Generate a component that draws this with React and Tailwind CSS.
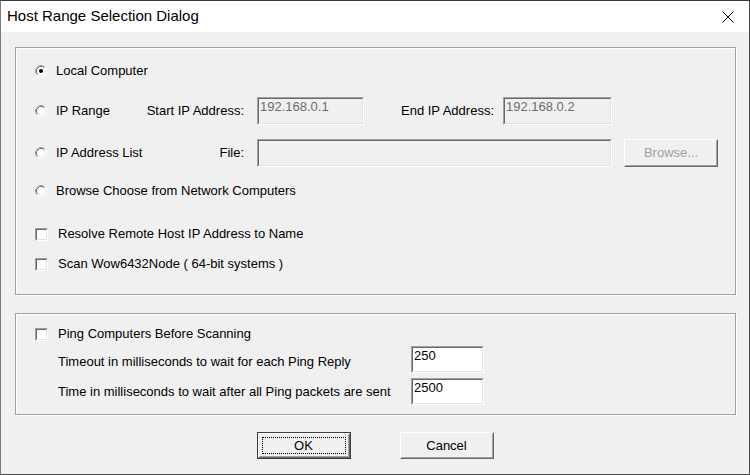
import React from 'react';

function Radio({ checked }) {
  return (
    <svg width="12" height="12" viewBox="0 0 12 12" className="shrink-0">
      <circle cx="6" cy="6" r="5.5" fill="#fff" />
      <path d="M2.11 9.89 A5.5 5.5 0 0 1 9.89 2.11" fill="none" stroke="#a0a0a0" strokeWidth="1" />
      <path d="M2.82 9.18 A4.5 4.5 0 0 1 9.18 2.82" fill="none" stroke="#696969" strokeWidth="1" />
      <path d="M9.89 2.11 A5.5 5.5 0 0 1 2.11 9.89" fill="none" stroke="#ffffff" strokeWidth="1" />
      <path d="M9.18 2.82 A4.5 4.5 0 0 1 2.82 9.18" fill="none" stroke="#e3e3e3" strokeWidth="1" />
      {checked && <circle cx="6" cy="6" r="2" fill="#000" />}
    </svg>
  );
}

function Check() {
  return (
    <div className="w-[13px] h-[13px] shrink-0 border border-t-[#a0a0a0] border-l-[#a0a0a0] border-b-white border-r-white">
      <div className="w-full h-full bg-white border border-t-[#696969] border-l-[#696969] border-b-[#e3e3e3] border-r-[#e3e3e3]" />
    </div>
  );
}

// sunken edit box
function Field({ className, value, disabled }) {
  return (
    <div className={`shrink-0 border border-t-[#a0a0a0] border-l-[#a0a0a0] border-b-white border-r-white ${className}`}>
      <div
        className={`w-full h-full border border-t-[#696969] border-l-[#696969] border-b-[#e3e3e3] border-r-[#e3e3e3] pl-[1px] leading-[15px] ${
          disabled ? 'bg-[#f0f0f0] text-[#6d6d6d]' : 'bg-white text-black'
        }`}
      >
        {value}
      </div>
    </div>
  );
}

function Button({ children, className, disabled, isDefault }) {
  const face = (
    <div className="w-full h-full border border-t-white border-l-white border-b-[#696969] border-r-[#696969]">
      <div className="w-full h-full border border-t-[#f0f0f0] border-l-[#f0f0f0] border-b-[#a0a0a0] border-r-[#a0a0a0] flex items-center justify-center p-[2px]">
        {isDefault ? (
          <div className="w-full h-full border border-dotted border-black flex items-center justify-center">{children}</div>
        ) : (
          <span className={disabled ? 'text-[#a0a0a0]' : 'text-black'}>{children}</span>
        )}
      </div>
    </div>
  );
  return (
    <div className={`shrink-0 bg-[#f0f0f0] ${isDefault ? 'border border-[#3c3c3c]' : ''} ${className}`}>
      {face}
    </div>
  );
}

function GroupBox({ className, children }) {
  return (
    <div className={`w-[721px] border border-[#a0a0a0] shadow-[inset_1px_1px_0_#fff,1px_1px_0_#fff] ${className}`}>
      {children}
    </div>
  );
}

export default function App() {
  return (
    <div className="w-[750px] h-[475px] flex flex-col bg-[#f0f0f0] border border-[#7a7a7a] border-t-[#3a3a3a] border-r-[#4a4a4a] border-b-[#4a4a4a] font-['Liberation_Sans',Arial,sans-serif] text-[13px] text-black overflow-hidden">
      {/* Title bar */}
      <div className="h-[31px] shrink-0 bg-white flex items-center justify-between pl-[6px] pr-[15px]">
        <span className="text-[15px]">Host Range Selection Dialog</span>
        <svg width="12" height="12" viewBox="0 0 12 12">
          <path d="M0.5 0.5 L11.5 11.5 M11.5 0.5 L0.5 11.5" stroke="#000" strokeWidth="1" />
        </svg>
      </div>

      <div className="flex-1 flex flex-col pl-[14px] pt-[15px]">
        {/* Host range group */}
        <GroupBox className="h-[248px] flex flex-col pl-[19px]">
          <div className="mt-[13px] h-[20px] flex items-center">
            <Radio checked />
            <span className="ml-[9px]">Local Computer</span>
          </div>

          <div className="mt-[16px] h-[28px] flex items-center">
            <div className="w-[111px] flex items-center">
              <Radio />
              <span className="ml-[9px]">IP Range</span>
            </div>
            <div className="w-[111px] text-right pr-[13px]">Start IP Address:</div>
            <Field className="w-[107px] h-[28px]" value="192.168.0.1" disabled />
            <div className="w-[139px] text-right pr-[9px]">End IP Address:</div>
            <Field className="w-[109px] h-[28px]" value="192.168.0.2" disabled />
          </div>

          <div className="mt-[14px] h-[28px] flex items-center">
            <div className="w-[111px] flex items-center">
              <Radio />
              <span className="ml-[9px]">IP Address List</span>
            </div>
            <div className="w-[111px] text-right pr-[13px]">File:</div>
            <Field className="w-[355px] h-[28px]" value="" disabled />
            <Button className="ml-[12px] w-[94px] h-[28px]" disabled>Browse...</Button>
          </div>

          <div className="mt-[14px] h-[20px] flex items-center">
            <Radio />
            <span className="ml-[9px]">Browse Choose from Network Computers</span>
          </div>

          <div className="mt-[23px] h-[20px] flex items-center">
            <Check />
            <span className="ml-[10px]">Resolve Remote Host IP Address to Name</span>
          </div>

          <div className="mt-[10px] h-[20px] flex items-center">
            <Check />
            <span className="ml-[10px]">Scan Wow6432Node ( 64-bit systems )</span>
          </div>
        </GroupBox>

        {/* Ping group */}
        <GroupBox className="mt-[18px] h-[102px] flex flex-col pl-[19px]">
          <div className="mt-[10px] h-[20px] flex items-center">
            <Check />
            <span className="ml-[10px]">Ping Computers Before Scanning</span>
          </div>

          <div className="mt-[2px] flex items-start">
            <div className="w-[376px] pl-[23px] mt-[8px] leading-[16px]">Timeout in milliseconds to wait for each Ping Reply</div>
            <Field className="w-[73px] h-[27px]" value="250" />
          </div>

          <div className="mt-[5px] flex items-start">
            <div className="w-[376px] pl-[23px] mt-[6px] leading-[16px]">Time in milliseconds to wait after all Ping packets are sent</div>
            <Field className="w-[73px] h-[27px]" value="2500" />
          </div>
        </GroupBox>

        {/* Buttons */}
        <div className="mt-[17px] w-[721px] flex justify-center gap-[49px] pr-[1px]">
          <Button className="w-[94px] h-[27px]" isDefault>OK</Button>
          <Button className="w-[94px] h-[27px]">Cancel</Button>
        </div>
      </div>
    </div>
  );
}
